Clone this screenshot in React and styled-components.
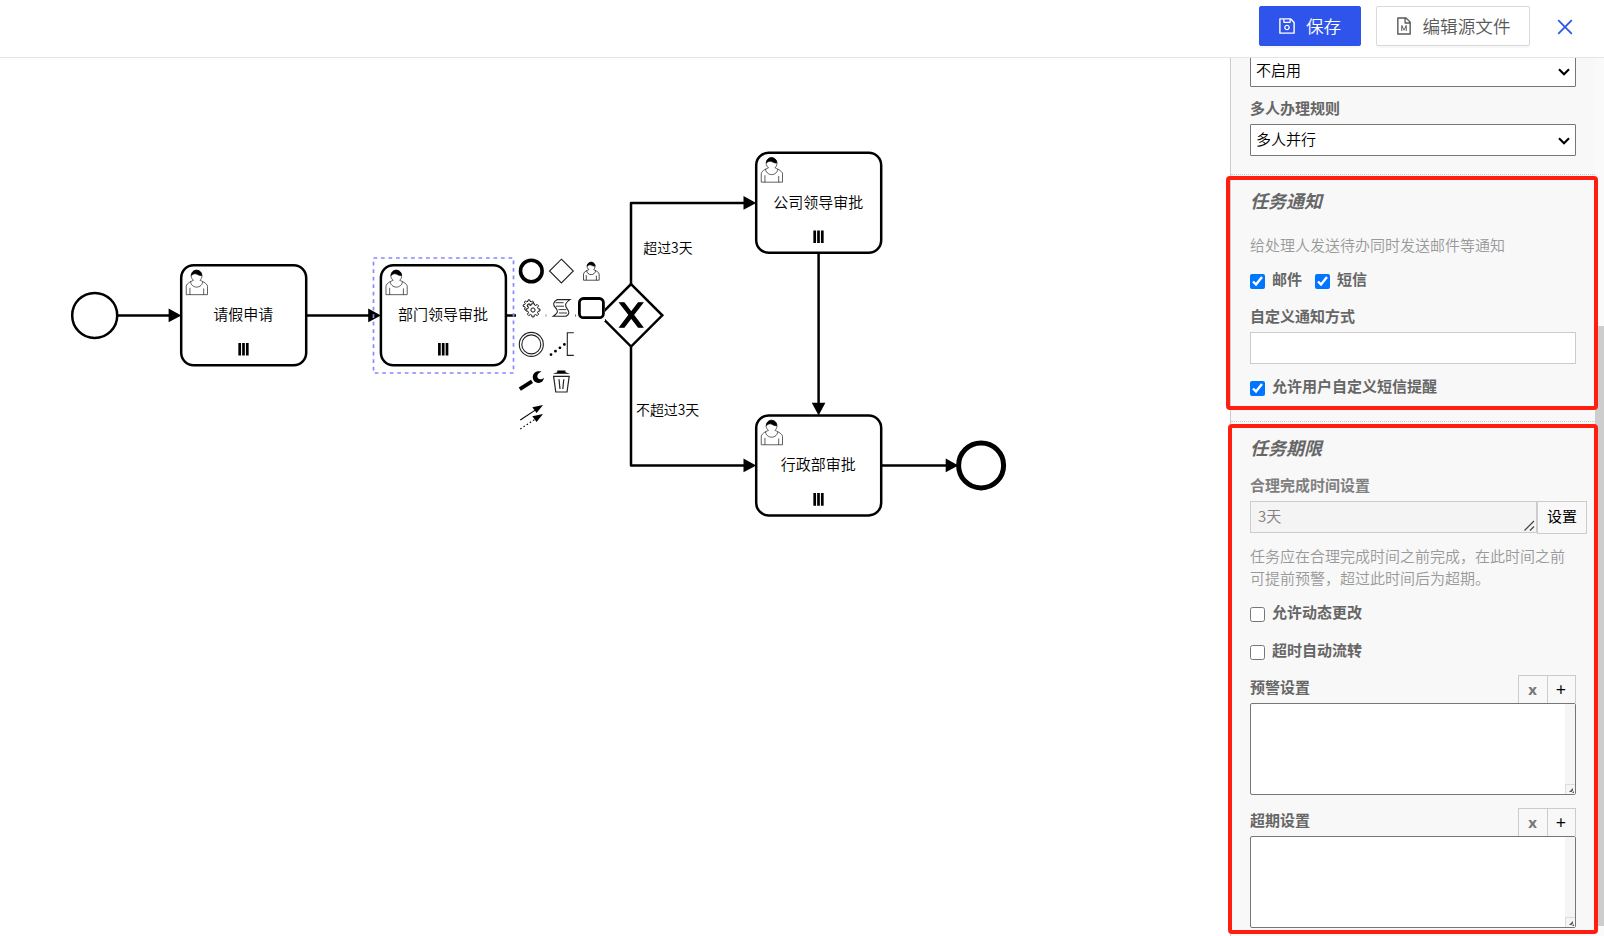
import React from "react"
import styled, { createGlobalStyle, css } from "styled-components"
import { AiOutlineSave, AiOutlineFileMarkdown, AiOutlineClose } from "react-icons/ai"


const GlobalStyle = createGlobalStyle`
* {
box-sizing: border-box;
}

body {
margin: 0;
overflow: hidden;
background-color: #fff;
font-family: "Noto Sans CJK SC", sans-serif;
font-weight: 350;
}
`

const Page = styled.div`
width: 1604px;
height: 936px;
display: flex;
flex-direction: column;
`

const Header = styled.header`
height: 58px;
flex: none;
display: flex;
justify-content: flex-end;
align-items: flex-start;
padding: 6px 19px 0 0;
border-bottom: 1px solid #e4e4e4;
`

const HeaderButton = styled.button`
width: ${({ $width }) => $width}px;
height: 40px;
display: flex;
align-items: center;
justify-content: center;
gap: 9px;
margin-right: 15px;
padding: 0 2px 0 0;
border: 1px solid ${({ $primary }) => ($primary ? "#2f54eb" : "#d9d9d9")};
border-radius: 2px;
background-color: ${({ $primary }) => ($primary ? "#2f54eb" : "#fff")};
color: ${({ $primary }) => ($primary ? "#fff" : "#595959")};
box-shadow: 0 2px 0 rgba(0,0,0,.03);
font-family: inherit;
font-weight: 350;
font-size: 17.6px;
line-height: 26px;
`

const CloseButton = styled.button`
width: 40px;
height: 42px;
display: flex;
align-items: center;
justify-content: center;
padding: 0 1px 0 0;
border: none;
background-color: transparent;
color: #2f54eb;
`

const Body = styled.main`
flex: 1;
min-height: 0;
display: flex;
position: relative;
`

const Canvas = styled.svg`
flex: 1;
height: 878px;
font-family: "Noto Sans CJK SC", sans-serif;
`

const Panel = styled.aside`
width: 374px;
height: 878px;
display: flex;
overflow: hidden;
border-left: 1px solid #ccc;
background-color: #f8f8f8;
`

const Content = styled.div`
width: 364px;
`

const Scrollbar = styled.div`
width: 9px;
height: 878px;
padding: 268px 0 10px;
background-color: #fafafa;
`

const Thumb = styled.div`
height: 600px;
background-color: #cdcdcd;
`

const Group = styled.section`
padding: ${({ $first }) => ($first ? "0" : "15px")} 0 ${({ $bottom }) => $bottom}px 19px;
border-bottom: 1px dotted #ccc;
`

const GroupTitle = styled.h3`
margin: 0;
height: 24px;
color: #666;
font-size: 18px;
font-weight: 700;
font-style: italic;
line-height: 21px;
`

const Label = styled.div`
height: 22px;
margin: ${({ $top }) => $top}px 0 4px;
color: ${({ $muted }) => ($muted ? "#808080" : "#666")};
font-size: 15px;
font-weight: 700;
line-height: 20px;
`

const Hint = styled.p`
width: 326px;
margin: ${({ $top }) => $top}px 0 0;
color: #999;
font-size: 15px;
line-height: 22px;
`

const SelectBox = styled.div`
width: 326px;
height: 32px;
display: flex;
justify-content: space-between;
align-items: center;
margin-top: ${({ $top }) => $top || 0}px;
padding: 0 5px 2px 5px;
border: 1px solid #767676;
border-radius: 1px;
background-color: #fff;
color: #000;
font-size: 15px;
line-height: 22px;
`

const Chevron = styled.svg`
width: 12px;
height: 8px;
margin-top: 3px;
`

const Input = styled.input`
display: block;
width: 326px;
height: 32px;
border: 1px solid #ccc;
background-color: #fff;
`

const Checks = styled.div`
height: 22px;
display: flex;
gap: 13px;
margin-top: ${({ $top }) => $top}px;
`

const CheckLabel = styled.label`
display: flex;
color: #666;
font-size: 15px;
font-weight: 700;
line-height: 20px;
`

const Checkbox = styled.input`
width: 15px;
height: 15px;
margin: 5px 7px 0 0;
`

const Duration = styled.div`
height: 33px;
display: flex;
align-items: flex-start;
`

const DurationText = styled.div`
width: 287px;
height: 32px;
display: flex;
justify-content: space-between;
align-items: flex-end;
padding: 0 1px 1px 7px;
border: 1px solid #ccc;
background-color: #f4f4f4;
color: #808080;
font-size: 15px;
line-height: 30px;
`

const SetButton = styled.button`
width: 50px;
height: 33px;
padding: 0 0 3px;
border: 1px solid #ccc;
background-color: #f8f8f8;
color: #000;
font-family: inherit;
font-size: 15px;
line-height: 28px;
`

const ListHead = styled.div`
width: 326px;
height: 28px;
display: flex;
justify-content: space-between;
margin-top: 13px;
`

const ListTitle = styled.div`
padding-top: 1px;
color: #666;
font-size: 15px;
font-weight: 700;
line-height: 22px;
`

const ListActions = styled.div`
display: flex;
`

const action = css`
height: 28px;
border: 1px solid #ccc;
border-bottom: none;
background-color: #f8f8f8;
font-family: "Open Sans", sans-serif;
line-height: 24px;
`

const ClearButton = styled.button`
${action}
width: 29px;
padding: 0 1px 2px 0;
border-right: none;
color: #777;
font-weight: 700;
font-size: 15px;
`

const AddButton = styled.button`
${action}
width: 29px;
padding: 0 1px 1px 0;
color: #000;
font-weight: 500;
font-size: 18px;
`

const ListBox = styled.div`
width: 326px;
height: 92px;
display: flex;
justify-content: flex-end;
border: 1px solid #767676;
border-radius: 2px;
background-color: #fff;
`

const ListTrack = styled.div`
width: 10px;
display: flex;
align-items: flex-end;
background-color: #f5f5f5;
`

const Corner = styled.svg`
display: block;
width: 10px;
height: 10px;
border: 1px solid #dcdcdc;
border-right: none;
border-bottom: none;
`

const Highlight = styled.div`
position: absolute;
left: ${({ $left }) => $left}px;
right: 6px;
top: ${({ $top }) => $top}px;
height: ${({ $height }) => $height}px;
border: 4px solid #ff1e10;
border-radius: 4px;
`

const tasks = [
  { name: "请假申请", x: 181.2, y: 265.3 },
  { name: "部门领导审批", x: 380.9, y: 265.3 },
  { name: "公司领导审批", x: 756.2, y: 152.8 },
  { name: "行政部审批", x: 756.2, y: 415.4 }
]

const flows = [
  "M118 315.4H169",
  "M306 315.4H369",
  "M506 315.4H600",
  "M631 284V202.9H744",
  "M631 346.6V465.4H744",
  "M818.6 253V403",
  "M881.5 465.4H946"
]

const arrows = [
  [181.3, 315.4, 0],
  [380.9, 315.4, 0],
  [756.2, 202.9, 0],
  [756.2, 465.4, 0],
  [818.6, 415.4, 90],
  [958.4, 465.4, 0]
]

const padCells = [
  [516, 257], [546.2, 257], [576, 257],
  [516, 293.5], [546.2, 293.5], [575.8, 293.5],
  [516, 330], [546.2, 330],
  [516, 366.5], [546.2, 366.5],
  [516, 403]
]

const UserIcon = ({ x, y, scale, line = 0.5 }) => (
  <g transform={`translate(${x} ${y}) scale(${scale})`} fill="#fff" stroke="#000" strokeWidth={line}>
    <path d="m 15,12 c 0.909,-0.845 1.594,-2.049 1.594,-3.385 0,-2.554 -1.805,-4.622 -4.357,-4.622 -2.552,0 -4.288,2.068 -4.288,4.622 0,1.348 0.974,2.562 1.896,3.405 -0.529,0.187 -5.669,2.097 -5.794,4.756 v 6.718 h 17 v -6.718 c 0,-2.298 -5.528,-4.595 -6.051,-4.776z m -8,6 l 0,5.5 m 11,0 l 0,-5"/>
    <path d="m 17.162,13.009 c 0,2.447 -2.158,4.431 -4.821,4.431 -2.665,0 -4.822,-1.981 -4.822,-4.431" fill="none"/>
    <path d="m 8.1,8.2 c 0,0 2.251,-2.358 4.274,-1.177 2.024,1.181 4.221,1.537 4.124,0.965 -0.098,-0.57 -0.117,-3.791 -4.191,-4.136 -3.572,0.001 -4.207,3.671 -4.207,4.348z" fill="#000"/>
  </g>
)

const Task = ({ name, x, y }) => (
  <g>
    <rect x={x} y={y} width="125" height="100" rx="12.5" fill="#fff" stroke="#000" strokeWidth="2.5"/>
    <UserIcon x={x} y={y} scale={1.25}/>
    <text x={x + 62} y={y + 55} fontSize="15" textAnchor="middle">{name}</text>
    <path d={`M${x + 58.5} ${y + 77.7}v12.6m3.8 -12.6v12.6m3.8 -12.6v12.6`} stroke="#000" strokeWidth="2.7"/>
  </g>
)

const gearPath = (r, teeth = 8) => {
  const points = []
  for (let i = 0; i < teeth; i++) {
    [[-0.3, 0.76], [-0.18, 1], [0.18, 1], [0.3, 0.76]].forEach(([shift, k]) => {
      const a = ((i + shift) / teeth) * Math.PI * 2
      points.push(`${(Math.cos(a) * r * k).toFixed(2)} ${(Math.sin(a) * r * k).toFixed(2)}`)
    })
  }
  return `M${points.join("L")}Z`
}

const Gear = ({ x, y, r }) => (
  <g transform={`translate(${x} ${y})`} fill="#fff" stroke="#111" strokeWidth="1">
    <path d={gearPath(r)}/>
    <circle r={r * 0.3}/>
  </g>
)

const ContextPad = () => (
  <g>
    {padCells.map(([x, y]) => (
      <rect key={`${x}-${y}`} x={x} y={y} width={x === 516 ? 29.8 : 29.2} height="27.5" fill="#fff"/>
    ))}
    <circle cx="531.3" cy="271" r="10.8" fill="none" stroke="#000" strokeWidth="3.6"/>
    <path d="M561.4 259.2L573.3 271L561.4 282.9L549.5 271Z" fill="none" stroke="#222" strokeWidth="1.1"/>
    <UserIcon x={579.8} y={258.6} scale={0.92} line={0.75}/>

    <Gear x={529} y={305.6} r={5.8}/>
    <Gear x={533} y={310} r={7}/>
    <g fill="none" stroke="#222" strokeWidth="1.1">
      <path d="M557.3 299.6H570C564 303.8 565 306 567.5 309.3C570 312.4 569 314.5 566 316.3H553.2C558.6 312.5 558.3 310.5 555.4 307.5C552.6 304.5 553 302 557.3 299.6Z"/>
      <path d="M555.5 302.7H563.6M556 306.2H564M558.5 309.6H566.3M559 313H567" strokeWidth="0.9"/>
    </g>
    <rect x="579.4" y="298.5" width="24" height="19.2" rx="4" fill="#fff" stroke="#000" strokeWidth="2.8"/>

    <g fill="none" stroke="#222" strokeWidth="1.1">
      <circle cx="531.3" cy="344.4" r="12"/>
      <circle cx="531.3" cy="344.4" r="9.5"/>
      <path d="M573.8 332.7H567.3V355.4H573.8"/>
    </g>
    <path d="M551 354.6L565.5 343.6" stroke="#000" strokeWidth="2.8" strokeLinecap="round" strokeDasharray="0 5.6"/>

    <path d="M519.8 389.2L532 381.4" stroke="#000" strokeWidth="3.8"/>
    <path d="M541.5 371.6C536.5 370 532.5 373 532.8 377.5C533 382 537.5 384 541 382.3C543 381.3 543.8 379.6 543.8 377.8C541 380.5 537.3 379.2 537.3 376.3C537.3 374.2 539 372.8 541.5 371.6Z"/>
    <g fill="none" stroke="#222" strokeWidth="1.2">
      <path d="M553.6 376.3H569.2L567 392H555.8Z"/>
      <path d="M559 379.3L560 389M563.8 379.3L562.8 389"/>
    </g>
    <path d="M552.8 373.8L557.3 372.3V370.5H565.4V372.3L570 373.8Z"/>

    <path d="M520.3 420L536 409.6" stroke="#000" strokeWidth="1.1"/>
    <path d="M520.3 429L536 418.6" stroke="#000" strokeWidth="1.1" strokeDasharray="1.6 2.2"/>
    <path d="M543 405L532.3 407.2L536.6 413ZM543 414L532.3 416.2L536.6 422Z"/>
  </g>
)

const Diagram = () => (
  <Canvas viewBox="0 58 1230 878">
    {flows.map(d => (
      <path key={d} d={d} fill="none" stroke="#000" strokeWidth="2.5" strokeLinejoin="round"/>
    ))}
    <circle cx="94.7" cy="315.4" r="22.5" fill="#fff" stroke="#000" strokeWidth="2.5"/>
    <circle cx="981.1" cy="465.4" r="22.5" fill="#fff" stroke="#000" strokeWidth="5"/>
    {tasks.map(task => <Task key={task.name} {...task}/>)}
    {arrows.map(([x, y, angle]) => (
      <path key={`${x}-${y}`} d="M0 0L-12.7 -6.8V6.8Z" transform={`translate(${x} ${y}) rotate(${angle})`}/>
    ))}
    <g transform="translate(599.8 284.1) scale(1.25)" stroke="#000">
      <path d="M25 0L50 25L25 50L0 25Z" fill="#fff" strokeWidth="2"/>
      <path d="m 16,15 7.429,9.714 -7.429,9.714 3.429,0 5.714,-7.464 5.714,7.464 3.429,0 -7.429,-9.714 7.429,-9.714 -3.429,0 -5.714,7.464 -5.714,-7.464 -3.429,0 z" strokeWidth="1"/>
    </g>
    <text x="643.3" y="252.5" fontSize="13.9">超过3天</text>
    <text x="636" y="415" fontSize="13.9">不超过3天</text>
    <rect x="373.5" y="258" width="140" height="115" fill="none" stroke="#8888ff" strokeWidth="1.7" strokeDasharray="3.75 3.75"/>
    <ContextPad/>
  </Canvas>
)

const Select = ({ value, top }) => (
  <SelectBox $top={top}>
    {value}
    <Chevron viewBox="0 0 12 8">
      <path d="M1 1.2L6 6.2L11 1.2" fill="none" stroke="#000" strokeWidth="2.1"/>
    </Chevron>
  </SelectBox>
)

const Check = ({ label, checked }) => (
  <CheckLabel>
    <Checkbox type="checkbox" defaultChecked={checked}/>
    {label}
  </CheckLabel>
)

const ListField = ({ title }) => (
  <>
    <ListHead>
      <ListTitle>{title}</ListTitle>
      <ListActions>
        <ClearButton type="button">x</ClearButton>
        <AddButton type="button">+</AddButton>
      </ListActions>
    </ListHead>
    <ListBox>
      <ListTrack>
        <Corner viewBox="0 0 9 9">
          <path d="M3 7L7 3V5.5L5.5 7ZM6 8L8 6V8Z" fill="#555"/>
        </Corner>
      </ListTrack>
    </ListBox>
  </>
)

const Properties = () => (
  <Panel>
    <Content>
      <Group $first $bottom={18}>
        <Select value="不启用" top={-3}/>
        <Label $top={11}>多人办理规则</Label>
        <Select value="多人并行"/>
      </Group>
      <Group $bottom={23}>
        <GroupTitle>任务通知</GroupTitle>
        <Hint $top={20}>给处理人发送待办同时发送邮件等通知</Hint>
        <Checks $top={13}>
          <Check label="邮件" checked/>
          <Check label="短信" checked/>
        </Checks>
        <Label $top={15}>自定义通知方式</Label>
        <Input type="text"/>
        <Checks $top={12}>
          <Check label="允许用户自定义短信提醒" checked/>
        </Checks>
      </Group>
      <Group $bottom={18}>
        <GroupTitle>任务期限</GroupTitle>
        <Label $top={14} $muted>合理完成时间设置</Label>
        <Duration>
          <DurationText>
            3天
            <svg width="11" height="11" viewBox="0 0 11 11">
              <path d="M0.5 10.5L10 1M6 10.5L10 6.5" stroke="#444" strokeWidth="1.2"/>
            </svg>
          </DurationText>
          <SetButton type="button">设置</SetButton>
        </Duration>
        <Hint $top={11}>任务应在合理完成时间之前完成，在此时间之前可提前预警，超过此时间后为超期。</Hint>
        <Checks $top={13}>
          <Check label="允许动态更改"/>
        </Checks>
        <Checks $top={16}>
          <Check label="超时自动流转"/>
        </Checks>
        <ListField title="预警设置"/>
        <ListField title="超期设置"/>
      </Group>
    </Content>
    <Scrollbar>
      <Thumb/>
    </Scrollbar>
  </Panel>
)

const App = () => (
  <Page>
    <GlobalStyle/>
    <Header>
      <HeaderButton type="button" $primary $width={102}>
        <AiOutlineSave size={20}/>
        保存
      </HeaderButton>
      <HeaderButton type="button" $width={154}>
        <AiOutlineFileMarkdown size={20}/>
        编辑源文件
      </HeaderButton>
      <CloseButton type="button">
        <AiOutlineClose size={22}/>
      </CloseButton>
    </Header>
    <Body>
      <Diagram/>
      <Properties/>
      <Highlight $left={1226} $top={118} $height={234}/>
      <Highlight $left={1228} $top={366} $height={510}/>
    </Body>
  </Page>
)

export default App
